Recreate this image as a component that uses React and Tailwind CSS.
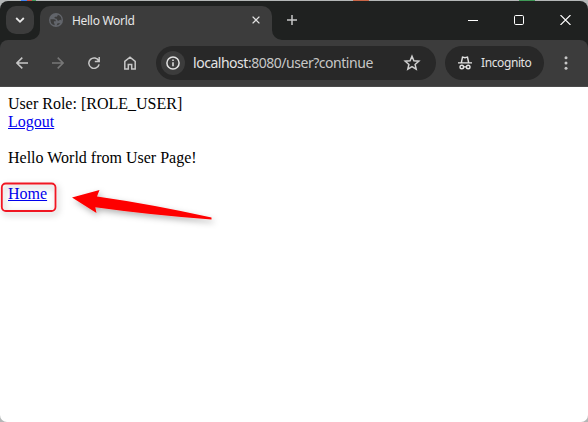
const UI = "font-['Noto_Sans','Open_Sans',sans-serif]";

function TabStrip() {
  return (
    <div className="flex h-[39px] shrink-0 rounded-t-[8px] bg-[#1f2120]">
      <button className="mt-[5px] ml-[6px] flex h-[28px] w-[28px] items-center justify-center rounded-[10px] bg-[#3c3c3c]">
        <svg width="10" height="8" viewBox="0 0 10 8" fill="none" stroke="#e8e8e8" strokeWidth="1.8">
          <path d="M1.2 2 5 5.8 8.8 2" />
        </svg>
      </button>
      <svg className="mt-auto -ml-[4px] shrink-0" width="10" height="10">
        <path d="M10 0V10H0A10 10 0 0 0 10 0Z" fill="#3c3c3c" />
      </svg>
      <div className="mt-[5px] flex h-[34px] w-[232px] shrink-0 items-start rounded-t-[10px] bg-[#3c3c3c] pl-[9px]">
        <svg className="mt-[7px]" width="14" height="14" viewBox="0 0 14 14">
          <circle cx="7" cy="7" r="7" fill="#62656b" />
          <path d="M1.500 6.200H4.800Q7 6.300 7 8.200H4.900V10.200Q6 10.400 5.600 12.300A5.500 5.500 0 0 1 1.500 6.200ZM8.700 1.700A5.500 5.500 0 0 1 12.500 7.400Q11.500 6.200 10.300 7.200 8.600 8.500 8.200 6.700 8 5.700 6.300 5.600 4.500 4.800 6 3.700H7.700Q8.800 3.200 8.700 1.700ZM7.600 12.500 8.600 10.300H11.300A5.500 5.500 0 0 1 7.600 12.500Z" fill="#3c3c3c" />
        </svg>
        <span className={`mt-[6px] ml-[9px] h-[18px] w-[64px] text-[12px] leading-[18px] tracking-[-0.3px] whitespace-nowrap text-[#e6e6e6] ${UI}`}>Hello World</span>
        <svg className="mt-[10px] ml-[116px]" width="8" height="8" viewBox="0 0 8 8" stroke="#e3e3e3" strokeWidth="1.3">
          <path d="m.6.6 6.800 6.800M7.400.6.6 7.400" />
        </svg>
      </div>
      <svg className="mt-auto shrink-0" width="10" height="10">
        <path d="M0 0V10H10A10 10 0 0 1 0 0Z" fill="#3c3c3c" />
      </svg>
      <svg className="mt-[14px] ml-[5px]" width="10" height="10" stroke="#c7c7c7" strokeWidth="1.5">
        <path d="M5 0V10M0 5H10" />
      </svg>
      <div className="mt-[14px] mr-[17px] ml-auto flex gap-[36px]">
        <svg width="10" height="10" stroke="#fff"><path d="M0 5.500H10" /></svg>
        <svg width="10" height="10" fill="none" stroke="#fff"><rect x=".5" y=".5" width="9" height="9" rx="1.200" /></svg>
        <svg width="11" height="10" stroke="#fff" strokeWidth="1.100"><path d="m.5 0 10 10M10.500 0 .5 10" /></svg>
      </div>
    </div>
  );
}

function Toolbar() {
  return (
    <div className="h-[47px] shrink-0 bg-[#1f2120]">
      <div className="flex h-full items-center rounded-t-[8px] border-b border-[#4a4a4a] bg-[#3c3c3c]">
        <svg className="ml-[16px]" width="12" height="12" fill="none" stroke="#c7c7c7" strokeWidth="1.500">
          <path d="M12 6H1M6.300.6.900 6l5.400 5.400" />
        </svg>
        <svg className="ml-[24px]" width="12" height="12" fill="none" stroke="#777" strokeWidth="1.500">
          <path d="M0 6H11M5.700.6 11.100 6l-5.400 5.400" />
        </svg>
        <svg className="ml-[24px]" width="12" height="12" fill="none" stroke="#c7c7c7" strokeWidth="1.500">
          <path d="M10.700 3.900A5.200 5.200 0 1 0 11.100 7.300M11.200 0V4.500H6.800" />
        </svg>
        <svg className="ml-[24px]" width="12" height="14" fill="none" stroke="#c7c7c7" strokeWidth="1.500">
          <path d="M.8 5.300 6 1.200l5.200 4.100V13H7.700V8.500H4.300V13H.8Z" />
        </svg>
        <div className="ml-[20px] flex h-[34px] w-[280px] items-center rounded-full bg-[#282828] pl-[5px]">
          <div className="flex h-[24px] w-[24px] items-center justify-center rounded-full bg-[#3c3c3c]">
            <svg width="14" height="14" fill="none" stroke="#e3e3e3" strokeWidth="1.500">
              <circle cx="7" cy="7" r="6.100" />
              <path d="M7 6.200V10.300M7 3.600V5.100" />
            </svg>
          </div>
          <span className={`ml-[8px] w-[182px] text-[14px] leading-[20px] tracking-[-0.47px] whitespace-nowrap text-[#c7c7c7] ${UI}`}>
            <span className="text-[#e3e3e3]">localhost</span>:8080/user?continue
          </span>
          <svg className="ml-[28px]" width="18" height="18" viewBox="0 0 18 18" fill="none" stroke="#d0d0d0" strokeWidth="1.500">
            <path d="m9 2.300 1.900 4.500 4.900.4-3.700 3.200 1.100 4.800L9 12.700l-4.200 2.500 1.100-4.800-3.700-3.200 4.900-.4Z" />
          </svg>
        </div>
        <div className="ml-[9px] flex h-[34px] w-[99px] items-center rounded-full bg-[#282828] pl-[13px]">
          <svg width="14" height="14" viewBox="0 0 14 14" fill="none" stroke="#e3e3e3" strokeWidth="1.400">
            <path d="M0 6.900H14M3.400 6.500 4.500 1.100 7 1.700l2.500-.6L10.600 6.500M5.700 10.900H8.300" />
            <circle cx="3.800" cy="11" r="1.800" />
            <circle cx="10.200" cy="11" r="1.800" />
          </svg>
          <span className={`ml-[9px] text-[12px] leading-[18px] tracking-[-0.4px] text-[#e3e3e3] ${UI}`}>Incognito</span>
        </div>
        <svg className="ml-[20px]" width="4" height="14" fill="#c7c7c7">
          <circle cx="2" cy="1.800" r="1.500" />
          <circle cx="2" cy="7" r="1.500" />
          <circle cx="2" cy="12.200" r="1.500" />
        </svg>
      </div>
    </div>
  );
}

export default function App() {
  return (
    <div className="flex h-[422px] w-[588px] flex-col overflow-hidden bg-[#b4b7b7]">
      <div className="flex h-px shrink-0">
        <div className="ml-[21px] h-px w-[6px] bg-[#4285f4]" />
        <div className="h-px w-[5px] bg-[#c9524a]" />
        <div className="h-px w-[4px] bg-[#3f9a57]" />
        <div className="ml-[317px] h-px w-[16px] bg-[#c96546]" />
        <div className="ml-[150px] h-px w-[16px] bg-[#3f9a57]" />
      </div>
      <TabStrip />
      <Toolbar />
      <main className="relative flex-1 rounded-b-[7px] bg-white px-[8px] pt-[8px] font-['Liberation_Serif',serif] text-[16px] leading-[18px] text-black">
        <div>User Role: [ROLE_USER]</div>
        <a className="text-[#0000ee] underline">Logout</a>
        <div className="mt-[18px]">Hello World from User Page!</div>
        <a className="mt-[18px] block w-fit text-[#0000ee] underline">Home</a>
        <svg className="absolute top-0 left-0" width="230" height="150" viewBox="0 87 230 150">
          <defs>
            <filter id="shadow" x="-20%" y="-40%" width="150%" height="200%">
              <feDropShadow dx="2" dy="3" stdDeviation="3" floodColor="#000" floodOpacity=".3" />
            </filter>
          </defs>
          <g filter="url(#shadow)">
            <rect x="1.800" y="183.500" width="53.700" height="27.500" rx="4" fill="none" stroke="#f01622" strokeWidth="1.800" />
            <path d="M72 197.500 99.500 190 97 196.500Q150 204 211.500 217.500V219.500Q150 215 95.300 207.300L96.500 213Z" fill="#fe0000" />
          </g>
        </svg>
      </main>
    </div>
  );
}
